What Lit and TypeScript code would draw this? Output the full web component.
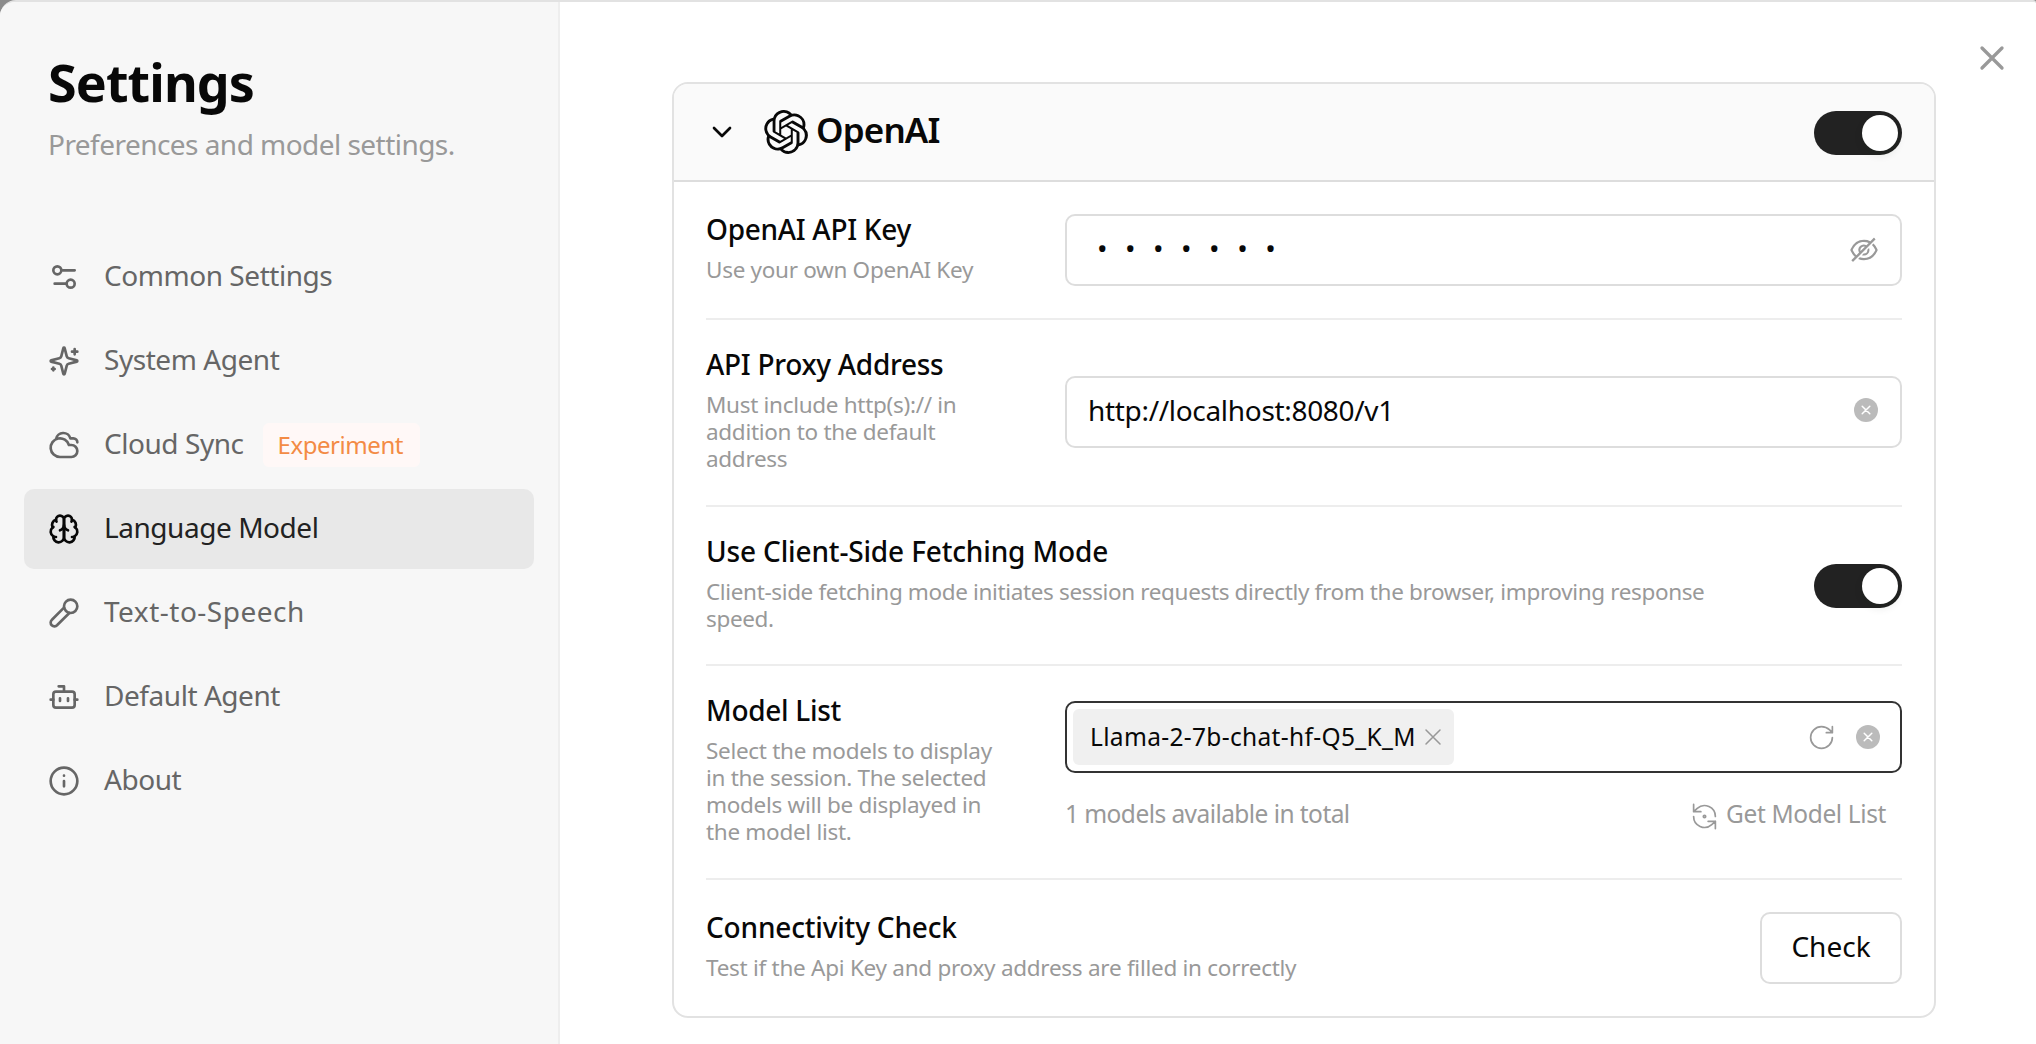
import { LitElement, html, css, svg, type SVGTemplateResult, type TemplateResult } from "lit";
import { customElement } from "lit/decorators.js";
import { classMap } from "lit/directives/class-map.js";

const glyphs = {
  sliders: svg`<path d="M20 7h-9M14 17H5"/><circle cx="17" cy="17" r="3"/><circle cx="7" cy="7" r="3"/>`,
  sparkles: svg`<path d="M9.937 15.5A2 2 0 0 0 8.5 14.063l-6.135-1.582a.5.5 0 0 1 0-.962L8.5 9.936A2 2 0 0 0 9.937 8.5l1.582-6.135a.5.5 0 0 1 .963 0L14.063 8.5A2 2 0 0 0 15.5 9.937l6.135 1.581a.5.5 0 0 1 0 .964L15.5 14.063a2 2 0 0 0-1.437 1.437l-1.582 6.135a.5.5 0 0 1-.963 0zM20 3v4M22 5h-4M4 17v2M5 18H3"/>`,
  cloudy: svg`<path d="M17.5 21H9a7 7 0 1 1 6.71-9h1.79a4.5 4.5 0 1 1 0 9ZM22 10a3 3 0 0 0-3-3h-2.207a5.502 5.502 0 0 0-10.702.5"/>`,
  brain: svg`<path d="M12 5a3 3 0 1 0-5.997.125 4 4 0 0 0-2.526 5.77 4 4 0 0 0 .556 6.588A4 4 0 1 0 12 18Z"/><path d="M12 5a3 3 0 1 1 5.997.125 4 4 0 0 1 2.526 5.77 4 4 0 0 1-.556 6.588A4 4 0 1 1 12 18Z"/><path d="M15 13a4.5 4.5 0 0 1-3-4 4.5 4.5 0 0 1-3 4M17.599 6.5a3 3 0 0 0 .399-1.375M6.003 5.125A3 3 0 0 0 6.401 6.5M3.477 10.896a4 4 0 0 1 .585-.396M19.938 10.5a4 4 0 0 1 .585.396M6 18a4 4 0 0 1-1.967-.516M19.967 17.484A4 4 0 0 1 18 18"/>`,
  mic: svg`<path d="m12 8-9.04 9.06a2.82 2.82 0 1 0 3.98 3.98L16 12"/><circle cx="17" cy="7" r="5"/>`,
  bot: svg`<path d="M12 8V4H8"/><rect width="16" height="12" x="4" y="8" rx="2"/><path d="M2 14h2M20 14h2M15 13v2M9 13v2"/>`,
  info: svg`<circle cx="12" cy="12" r="10"/><path d="M12 16v-4M12 8h.01"/>`,
  chevron: svg`<path d="m6 9 6 6 6-6"/>`,
  close: svg`<path d="M18 6 6 18M6 6l12 12"/>`,
  reload: svg`<path d="M21 12a9 9 0 1 1-9-9c2.52 0 4.93 1 6.74 2.74L21 8M21 3v5h-5"/>`,
  refresh: svg`<path d="M3 2v6h6M21 12A9 9 0 0 0 6 5.3L3 8M21 22v-6h-6M3 12a9 9 0 0 0 15 6.7l3-2.7"/><circle cx="12" cy="12" r="1"/>`,
  clear: svg`<circle cx="12" cy="12" r="12" fill="currentColor" stroke="none"/><path d="m8.2 8.2 7.6 7.6M15.8 8.2l-7.6 7.6" stroke="#fff" stroke-width="1.5"/>`,
};

type GlyphName = keyof typeof glyphs;

const icon = (name: GlyphName, size: number, stroke = 2): TemplateResult => html`<svg
  width=${size} height=${size} viewBox="0 0 24 24" fill="none" stroke="currentColor"
  stroke-width=${stroke} stroke-linecap="round" stroke-linejoin="round">${glyphs[name] as SVGTemplateResult}</svg>`;

const eyeOff = html`<svg width="32" height="32" viewBox="0 0 1024 1024" fill="currentColor">
  <path d="M942.2 486.2Q889.47 375.11 816.7 305l-50.88 50.88C807.31 395.53 843.45 447.4 874.7 512 791.5 684.2 673.4 766 512 766q-72.67 0-133.87-22.38L323 798.75Q408 838 512 838q288.3 0 430.2-300.3a60.29 60.29 0 000-51.5zm-63.57-320.64L836 122.88a8 8 0 00-11.32 0L715.31 232.2Q624.86 186 512 186q-288.3 0-430.2 300.3a60.3 60.3 0 000 51.5q56.69 119.4 136.5 191.41L112.48 835a8 8 0 000 11.31L155.17 889a8 8 0 0011.31 0l712.15-712.12a8 8 0 000-11.32zM149.3 512C232.6 339.8 350.7 258 512 258c54.54 0 104.13 9.36 149.12 28.39l-70.3 70.3a176 176 0 00-238.13 238.13l-83.42 83.42C223.1 637.49 183.3 582.28 149.3 512zm246.7 0a112.11 112.11 0 01146.2-106.69L401.31 546.2A112 112 0 01396 512z"/>
  <path d="M508 624c-3.46 0-6.87-.16-10.25-.47l-52.82 52.82a176.09 176.09 0 00227.42-227.42l-52.82 52.82c.31 3.38.47 6.79.47 10.25a111.94 111.94 0 01-112 112z"/>
</svg>`;

const openaiMark = html`<svg width="44" height="44" viewBox="0 0 24 24" fill="currentColor">
  <path d="M22.2819 9.8211a5.9847 5.9847 0 0 0-.5157-4.9108 6.0462 6.0462 0 0 0-6.5098-2.9A6.0651 6.0651 0 0 0 4.9807 4.1818a5.9847 5.9847 0 0 0-3.9977 2.9 6.0462 6.0462 0 0 0 .7427 7.0966 5.98 5.98 0 0 0 .511 4.9107 6.051 6.051 0 0 0 6.5146 2.9001A5.9847 5.9847 0 0 0 13.2599 24a6.0557 6.0557 0 0 0 5.7718-4.2058 5.9894 5.9894 0 0 0 3.9977-2.9001 6.0557 6.0557 0 0 0-.7475-7.0729zm-9.022 12.6081a4.4755 4.4755 0 0 1-2.8764-1.0408l.1419-.0804 4.7783-2.7582a.7948.7948 0 0 0 .3927-.6813v-6.7369l2.02 1.1686a.071.071 0 0 1 .038.0615v5.5826a4.504 4.504 0 0 1-4.4945 4.4944zm-9.6607-4.1254a4.4708 4.4708 0 0 1-.5346-3.0137l.142.0852 4.783 2.7582a.7712.7712 0 0 0 .7806 0l5.8428-3.3685v2.3324a.0804.0804 0 0 1-.0332.0615L9.74 19.9502a4.4992 4.4992 0 0 1-6.1408-1.6464zM2.3408 7.8956a4.485 4.485 0 0 1 2.3655-1.9728V11.6a.7664.7664 0 0 0 .3879.6765l5.8144 3.3543-2.0201 1.1685a.0757.0757 0 0 1-.071 0l-4.8303-2.7865A4.504 4.504 0 0 1 2.3408 7.872zm16.5963 3.8558L13.1038 8.364 15.1192 7.2a.0757.0757 0 0 1 .071 0l4.8303 2.7913a4.4944 4.4944 0 0 1-.6765 8.1042v-5.6772a.79.79 0 0 0-.407-.667zm2.0107-3.0231l-.142-.0852-4.7735-2.7818a.7759.7759 0 0 0-.7854 0L9.409 9.2297V6.8974a.0662.0662 0 0 1 .0284-.0615l4.8303-2.7866a4.4992 4.4992 0 0 1 6.6802 4.66zM8.3065 12.863l-2.02-1.1638a.0804.0804 0 0 1-.038-.0567V6.0742a4.4992 4.4992 0 0 1 7.3757-3.4537l-.142.0805L8.704 5.459a.7948.7948 0 0 0-.3927.6813zm1.0976-2.3654l2.602-1.4998 2.6069 1.4998v2.9994l-2.5974 1.4997-2.6067-1.4997Z"/>
</svg>`;

interface NavItem {
  icon: GlyphName;
  label: string;
  badge?: string;
  active?: boolean;
  wide?: boolean;
}

const navItems: NavItem[] = [
  { icon: "sliders", label: "Common Settings" },
  { icon: "sparkles", label: "System Agent" },
  { icon: "cloudy", label: "Cloud Sync", badge: "Experiment" },
  { icon: "brain", label: "Language Model", active: true },
  { icon: "mic", label: "Text-to-Speech", wide: true },
  { icon: "bot", label: "Default Agent" },
  { icon: "info", label: "About" },
];

@customElement("settings-nav")
export class SettingsNav extends LitElement {
  static styles = css`
    :host {
      display: block;
      box-sizing: border-box;
      width: 560px;
      padding: 50px 24px 0;
      background: #f7f7f7;
      border-right: 2px solid #eeeeee;
    }
    h1 {
      margin: 0 0 12px 24px;
      font-size: 52px;
      line-height: 60px;
      font-weight: 700;
      letter-spacing: -0.9px;
      color: #080808;
    }
    .sub {
      margin: 0 0 73px 24px;
      font-size: 28px;
      line-height: 40px;
      letter-spacing: -0.54px;
      color: #999;
    }
    nav {
      display: flex;
      flex-direction: column;
      gap: 4px;
    }
    .item {
      display: flex;
      align-items: center;
      height: 80px;
      padding: 0 24px;
      border-radius: 10px;
      color: #666;
    }
    .item.active {
      background: #e8e8e8;
      color: #222;
    }
    .item.active svg {
      color: #080808;
    }
    .label {
      margin-left: 24px;
      padding-bottom: 4px;
      font-size: 28px;
      line-height: 36px;
      letter-spacing: -0.45px;
    }
    .label.wide {
      letter-spacing: 0.5px;
    }
    .badge {
      display: flex;
      align-items: center;
      box-sizing: border-box;
      height: 44px;
      width: 157px;
      margin-left: 19px;
      padding: 0 0 2px 15px;
      border-radius: 6px;
      background: #fff8f7;
      color: #f38b45;
      font-size: 24px;
      letter-spacing: -0.45px;
    }
  `;

  render() {
    return html`
      <h1>Settings</h1>
      <div class="sub">Preferences and model settings.</div>
      <nav>
        ${navItems.map(
          (n) => html`<div class=${classMap({ item: true, active: !!n.active })}>
            ${icon(n.icon, 32)}
            <span class=${classMap({ label: true, wide: !!n.wide })}>${n.label}</span>
            ${n.badge ? html`<span class="badge">${n.badge}</span>` : ""}
          </div>`
        )}
      </nav>
    `;
  }
}

@customElement("toggle-switch")
export class ToggleSwitch extends LitElement {
  static styles = css`
    :host {
      display: flex;
      justify-content: flex-end;
      box-sizing: border-box;
      flex: none;
      width: 88px;
      height: 44px;
      padding: 4px;
      border-radius: 22px;
      background: #222;
    }
    .knob {
      width: 36px;
      height: 36px;
      border-radius: 50%;
      background: #fff;
      box-shadow: 0 4px 8px rgba(0, 35, 11, 0.1);
    }
  `;

  render() {
    return html`<span class="knob"></span>`;
  }
}

@customElement("setting-row")
export class SettingRow extends LitElement {
  static properties = { heading: {}, desc: {} };
  declare heading: string;
  declare desc: string;

  static styles = css`
    :host {
      display: flex;
      align-items: center;
      justify-content: space-between;
      box-sizing: border-box;
    }
    .text {
      width: var(--text-width, 300px);
      padding-bottom: 5px;
    }
    .heading {
      font-size: 28px;
      line-height: 32px;
      font-weight: 500;
      letter-spacing: var(--heading-tracking, -0.3px);
      color: #080808;
      margin-bottom: 11px;
    }
    .desc {
      font-size: 22.5px;
      line-height: 27px;
      letter-spacing: var(--desc-tracking, -0.3px);
      color: #999;
    }
  `;

  render() {
    return html`
      <div class="text">
        <div class="heading">${this.heading}</div>
        <div class="desc">${this.desc}</div>
      </div>
      <slot></slot>
    `;
  }
}

@customElement("provider-card")
export class ProviderCard extends LitElement {
  static styles = css`
    :host {
      display: block;
      box-sizing: border-box;
      width: 1264px;
      border: 2px solid #e2e2e2;
      border-radius: 16px;
      background: #fff;
      overflow: hidden;
    }
    svg {
      flex: none;
    }
    header {
      display: flex;
      align-items: center;
      height: 96px;
      padding: 0 32px;
      background: #fafafa;
      border-bottom: 2px solid #dddddd;
      color: #080808;
    }
    .mark {
      display: flex;
      margin-left: 26px;
    }
    .brand {
      flex: 1;
      margin-left: 8px;
      padding-bottom: 4px;
      font-size: 35px;
      line-height: 44px;
      font-weight: 600;
      letter-spacing: -0.85px;
    }
    .head-switch {
      margin-top: 2px;
    }
    .rows {
      padding: 0 32px;
    }
    setting-row {
      border-bottom: 2px solid #ededed;
      height: 187px;
    }
    setting-row.short {
      height: 138px;
    }
    setting-row.mid {
      height: 159px;
      --text-width: 1040px;
      --heading-tracking: -0.15px;
      --desc-tracking: -0.36px;
    }
    setting-row.tall {
      height: 214px;
    }
    setting-row.last {
      height: 136px;
      border-bottom: 0;
      --text-width: 900px;
      --heading-tracking: -0.18px;
      --desc-tracking: -0.27px;
    }
    .field {
      display: flex;
      align-items: center;
      justify-content: space-between;
      box-sizing: border-box;
      width: 837px;
      height: 72px;
      padding: 0 20px;
      border: 2px solid #dddddd;
      border-radius: 10px;
      color: #999;
    }
    .field.plain {
      margin-bottom: 1px;
    }
    .value {
      padding: 0 0 4px 1px;
      font-size: 28px;
      line-height: 36px;
      letter-spacing: -0.32px;
      color: #080808;
    }
    .value.secret {
      padding-left: 10px;
      letter-spacing: 17.5px;
    }
    .clear {
      display: flex;
      margin: 0 2px 4px 0;
      color: #bbb;
    }
    .select {
      border-color: #333;
      padding: 0 20px 0 6px;
    }
    .tag {
      display: flex;
      align-items: center;
      justify-content: space-between;
      box-sizing: border-box;
      width: 381px;
      height: 56px;
      padding: 0 7px 0 17px;
      border-radius: 6px;
      background: #f0f0f0;
      color: #999;
    }
    .tag span {
      padding-bottom: 2px;
      font-size: 24.5px;
      letter-spacing: 0.33px;
      color: #080808;
    }
    .actions {
      display: flex;
      align-items: center;
      gap: 20px;
    }
    .actions .clear {
      margin: 0;
    }
    .summary {
      display: flex;
      align-items: center;
      justify-content: space-between;
      box-sizing: border-box;
      height: 70px;
      padding: 12px 16px 0 0;
      font-size: 24.5px;
      line-height: 36px;
      letter-spacing: -0.56px;
      color: #999;
    }
    .fetch {
      display: flex;
      align-items: center;
      gap: 7px;
      letter-spacing: -0.38px;
    }
    .fetch svg {
      margin-top: 4px;
    }
    .check {
      display: flex;
      align-items: center;
      justify-content: center;
      box-sizing: border-box;
      width: 142px;
      height: 72px;
      padding-bottom: 4px;
      border: 2px solid #dddddd;
      border-radius: 10px;
      font-size: 28px;
      color: #080808;
    }
  `;

  render() {
    return html`
      <header>
        ${icon("chevron", 32)}
        <span class="mark">${openaiMark}</span>
        <span class="brand">OpenAI</span>
        <toggle-switch class="head-switch"></toggle-switch>
      </header>
      <div class="rows">
        <setting-row class="short" heading="OpenAI API Key" desc="Use your own OpenAI Key">
          <div class="field"><span class="value secret">•••••••</span>${eyeOff}</div>
        </setting-row>
        <setting-row heading="API Proxy Address" desc="Must include http(s):// in addition to the default address">
          <div class="field plain">
            <span class="value">http://localhost:8080/v1</span>
            <span class="clear">${icon("clear", 24)}</span>
          </div>
        </setting-row>
        <setting-row
          class="mid"
          heading="Use Client-Side Fetching Mode"
          desc="Client-side fetching mode initiates session requests directly from the browser, improving response speed."
        >
          <toggle-switch></toggle-switch>
        </setting-row>
        <setting-row
          class="tall"
          heading="Model List"
          desc="Select the models to display in the session. The selected models will be displayed in the model list."
        >
          <div>
            <div class="field select">
              <div class="tag"><span>Llama-2-7b-chat-hf-Q5_K_M</span>${icon("close", 28, 1.3)}</div>
              <div class="actions">
                ${icon("reload", 29, 1.4)}
                <span class="clear">${icon("clear", 24)}</span>
              </div>
            </div>
            <div class="summary">
              <span>1 models available in total</span>
              <span class="fetch">${icon("refresh", 29, 1.4)}Get Model List</span>
            </div>
          </div>
        </setting-row>
        <setting-row
          class="last"
          heading="Connectivity Check"
          desc="Test if the Api Key and proxy address are filled in correctly"
        >
          <div class="check">Check</div>
        </setting-row>
      </div>
    `;
  }
}

@customElement("app-root")
export class AppRoot extends LitElement {
  static styles = css`
    :host {
      display: block;
      height: 1044px;
      background: #8c8c8c;
      font-family: "Noto Sans", "Liberation Sans", sans-serif;
    }
    .dialog {
      display: flex;
      box-sizing: border-box;
      height: 1044px;
      border-top: 2px solid #e2e2e2;
      border-radius: 16px 3px 0 0;
      background: #fff;
      overflow: hidden;
    }
    main {
      display: flex;
      flex: 1;
      align-items: flex-start;
      padding: 80px 0 0 112px;
    }
    .close {
      display: flex;
      margin: -44px 0 0 36px;
      color: #999;
    }
  `;

  render() {
    return html`
      <div class="dialog">
        <settings-nav></settings-nav>
        <main>
          <provider-card></provider-card>
          <span class="close">${icon("close", 40)}</span>
        </main>
      </div>
    `;
  }
}
